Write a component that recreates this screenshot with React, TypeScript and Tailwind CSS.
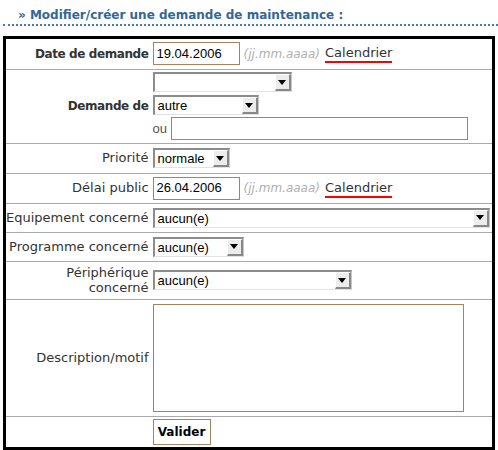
import React from "react";

const labelFont = { fontFamily: '"DejaVu Sans", Verdana, sans-serif' };

const FakeSelect = ({ width, value }: { width: number; value: string }) => (
  <div
    className="flex h-[20px] items-stretch border-t-2 border-l-2 border-b border-r border-t-[#8c8c8c] border-l-[#8c8c8c] border-b-[#e2e2e2] border-r-[#c8c8c8] bg-white"
    style={{ width }}
  >
    <span className="flex-1 truncate pl-[3px] text-[13px] leading-[17px] text-black [font-family:'Liberation_Sans',Arial,sans-serif]">
      {value}
    </span>
    <span className="flex w-[16px] items-center justify-center border-t border-l border-r-2 border-b-2 border-t-white border-l-white border-r-[#888] border-b-[#888] bg-[#ececec]">
      <span className="h-0 w-0 border-x-[4px] border-t-[5px] border-x-transparent border-t-black" />
    </span>
  </div>
);

const TextInput = ({ width, value }: { width: number; value?: string }) => (
  <div
    className="flex h-[23px] items-center border border-[#a8825a] bg-white pl-[3px] text-[13px] text-black [font-family:'Liberation_Sans',Arial,sans-serif]"
    style={{ width }}
  >
    {value}
  </div>
);

const DateHint = () => (
  <>
    <span className="ml-[4px] italic text-[#b0b0b0] text-[12px]">(jj.mm.aaaa)</span>
    <span className="ml-[5px] border-b-2 border-[#ff0000] leading-[17px] text-[#333]">Calendrier</span>
  </>
);

export default function App() {
  return (
    <div className="w-[498px] h-[450px] bg-white text-[13px] text-[#333]" style={labelFont}>
      <div className="pt-[8px]">
        <div className="pl-[18px] text-[12px] font-bold text-[#336699] leading-[15px]">
          » Modifier/créer une demande de maintenance :
        </div>
        <div className="ml-[3px] mt-[1px] border-b-2 border-dotted border-[#4a7aab]" />
      </div>

      <div className="mt-[10px] ml-[3px] w-[492px] border-[3px] border-black shadow-[0_2px_0_#b4b4b4]">
        <table className="w-full border-collapse">
          <tbody>
            <tr className="h-[30px] border-b border-[#aaa]">
              <td className="w-[144px] pr-[2px] text-right text-[12px] font-bold tracking-[-0.4px]">
                Date de demande
              </td>
              <td className="pl-[2px]">
                <div className="flex items-center">
                  <TextInput width={87} value="19.04.2006" />
                  <DateHint />
                </div>
              </td>
            </tr>
            <tr className="h-[74px] border-b border-[#aaa]">
              <td className="pr-[2px] text-right text-[12px] font-bold tracking-[-0.4px]">Demande de</td>
              <td className="pl-[2px]">
                <div className="flex flex-col gap-[3px]">
                  <FakeSelect width={139} value="" />
                  <FakeSelect width={106} value="autre" />
                  <div className="flex items-center">
                    <span className="mr-[4px] text-[13px] text-[#555] [font-family:'Liberation_Sans',Arial,sans-serif]">ou</span>
                    <div className="-mt-[1px]">
                      <TextInput width={297} />
                    </div>
                  </div>
                </div>
              </td>
            </tr>
            <tr className="h-[30px] border-b border-[#aaa]">
              <td className="pr-[2px] text-right">Priorité</td>
              <td className="pl-[2px]">
                <FakeSelect width={77} value="normale" />
              </td>
            </tr>
            <tr className="h-[30px] border-b border-[#aaa]">
              <td className="pr-[2px] text-right">Délai public</td>
              <td className="pl-[2px]">
                <div className="flex items-center">
                  <TextInput width={87} value="26.04.2006" />
                  <DateHint />
                </div>
              </td>
            </tr>
            <tr className="h-[29px] border-b border-[#aaa]">
              <td className="pr-[2px] text-right whitespace-nowrap">Equipement concerné</td>
              <td className="pl-[2px]">
                <FakeSelect width={337} value="aucun(e)" />
              </td>
            </tr>
            <tr className="h-[29px] border-b border-[#aaa]">
              <td className="pr-[2px] text-right whitespace-nowrap">Programme concerné</td>
              <td className="pl-[2px]">
                <FakeSelect width={91} value="aucun(e)" />
              </td>
            </tr>
            <tr className="h-[38px] border-b border-[#aaa]">
              <td className="pr-[2px] text-right leading-[15px]">
                Périphérique
                <br />
                concerné
              </td>
              <td className="pl-[2px]">
                <FakeSelect width={199} value="aucun(e)" />
              </td>
            </tr>
            <tr className="h-[117px] border-b border-[#aaa]">
              <td className="pr-[2px] text-right">Description/motif</td>
              <td className="pl-[2px]">
                <div className="h-[108px] w-[311px] border border-[#a8825a] bg-white" />
              </td>
            </tr>
            <tr className="h-[31px]">
              <td />
              <td className="pl-[2px]">
                <div className="flex h-[26px] w-[58px] items-center justify-center border border-[#a8825a] bg-white text-[12px] font-bold text-black">
                  Valider
                </div>
              </td>
            </tr>
          </tbody>
        </table>
      </div>
    </div>
  );
}
